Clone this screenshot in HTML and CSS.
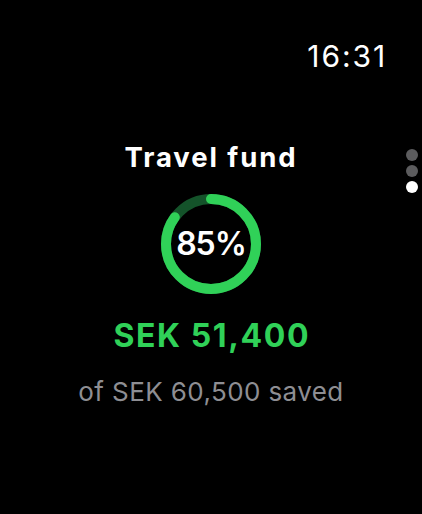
FILE: index.html
```html
<!DOCTYPE html>
<html>
<head>
<meta charset="utf-8">
<link rel="stylesheet" href="styles.css">
</head>
<body>
<div class="screen">
  <div class="status"><span class="time">16:31</span></div>
  <div class="content">
    <div class="title">Travel fund</div>
    <div class="ring">
      <svg width="102" height="102" viewBox="0 0 102 102">
        <circle cx="51" cy="51" r="45" fill="none" stroke="#14532a" stroke-width="10"/>
        <circle cx="51" cy="51" r="45" fill="none" stroke="#30d158" stroke-width="10" stroke-linecap="round" stroke-dasharray="240.33 282.74" transform="rotate(-90 51 51)"/>
      </svg>
      <span class="pct">85%</span>
    </div>
    <div class="amount">SEK 51,400</div>
    <div class="sub">of SEK 60,500 saved</div>
  </div>
  <div class="pager">
    <span class="dot"></span>
    <span class="dot"></span>
    <span class="dot active"></span>
  </div>
</div>
</body>
</html>
```
FILE: styles.css
```css
html, body {
  margin: 0;
  padding: 0;
  background: #000;
}
.screen {
  position: relative;
  width: 422px;
  height: 514px;
  background: #000;
  font-family: Inter, "Noto Sans", sans-serif;
  color: #fff;
  overflow: hidden;
}
.status {
  display: flex;
  justify-content: flex-end;
  padding: 38px 35px 0 0;
}
.time {
  font-size: 30px;
  line-height: 36px;
  font-weight: 400;
  letter-spacing: 1.9px;
}
.content {
  display: flex;
  flex-direction: column;
  align-items: center;
  margin-top: 67px;
}
.title {
  font-size: 27.5px;
  line-height: 32px;
  font-weight: 700;
  letter-spacing: 1.9px;
}
.ring {
  position: relative;
  width: 102px;
  height: 102px;
  margin-top: 20px;
  display: flex;
  align-items: center;
  justify-content: center;
}
.ring svg {
  position: absolute;
  left: 0;
  top: 0;
}
.pct {
  position: relative;
  font-size: 32px;
  line-height: 36px;
  font-weight: 600;
  letter-spacing: -1px;
}
.amount {
  margin-top: 22px;
  font-size: 32px;
  line-height: 38px;
  font-weight: 700;
  letter-spacing: 1.6px;
  padding-left: 1.6px;
  color: #30d158;
}
.sub {
  margin-top: 22px;
  font-size: 26px;
  line-height: 30px;
  letter-spacing: 0.4px;
  color: #8e8e93;
}
.pager {
  position: absolute;
  right: 4px;
  top: 149px;
  display: flex;
  flex-direction: column;
  gap: 4px;
}
.dot {
  width: 12px;
  height: 12px;
  border-radius: 50%;
  background: #5c5c5e;
}
.dot.active {
  background: #fff;
}
```
